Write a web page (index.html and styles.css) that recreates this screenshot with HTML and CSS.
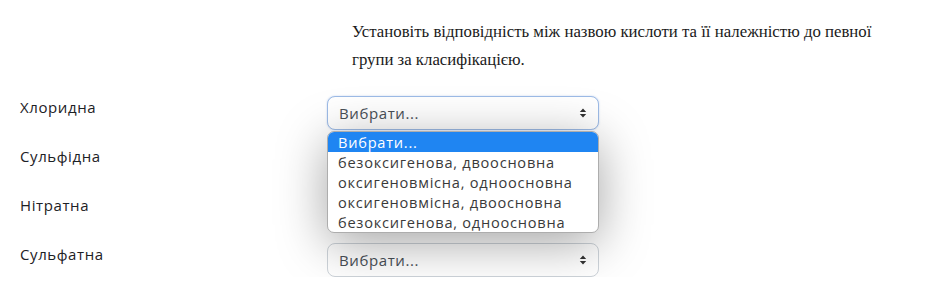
FILE: index.html
```html
<!DOCTYPE html>
<html lang="uk">

<head>
    <title>Відповідність кислот</title>
    <link rel="stylesheet" href="styles.css">
</head>

<body>
<div class="question">
    <div class="qtext">
        Установіть відповідність між назвою кислоти та її належністю до певної<br>
        групи за класифікацією.
    </div>

    <div class="answer">
        <div class="row">
            <div class="label">Хлоридна</div>
            <div class="select focused">
                <span>Вибрати...</span>
                <svg class="arrows" width="8" height="10" viewBox="0 0 8 10"><path d="M4 0.5L7.2 4H0.8Z M4 9.5L7.2 6H0.8Z" fill="#333"/></svg>
            </div>
        </div>
        <div class="row">
            <div class="label">Сульфідна</div>
            <div class="select">
                <span>Вибрати...</span>
                <svg class="arrows" width="8" height="10" viewBox="0 0 8 10"><path d="M4 0.5L7.2 4H0.8Z M4 9.5L7.2 6H0.8Z" fill="#333"/></svg>
            </div>
        </div>
        <div class="row">
            <div class="label">Нітратна</div>
            <div class="select">
                <span>Вибрати...</span>
                <svg class="arrows" width="8" height="10" viewBox="0 0 8 10"><path d="M4 0.5L7.2 4H0.8Z M4 9.5L7.2 6H0.8Z" fill="#333"/></svg>
            </div>
        </div>
        <div class="row">
            <div class="label">Сульфатна</div>
            <div class="select">
                <span>Вибрати...</span>
                <svg class="arrows" width="8" height="10" viewBox="0 0 8 10"><path d="M4 0.5L7.2 4H0.8Z M4 9.5L7.2 6H0.8Z" fill="#333"/></svg>
            </div>
        </div>
    </div>

    <!-- open list of the first select -->
    <ul class="dropdown">
        <li class="selected">Вибрати...</li>
        <li>безоксигенова, двоосновна</li>
        <li>оксигеновмісна, одноосновна</li>
        <li>оксигеновмісна, двоосновна</li>
        <li>безоксигенова, одноосновна</li>
    </ul>
</div>
</body>

</html>
```

FILE: styles.css
```css
body {
    margin: 0;
    background-color: #fff;
    color: #1d2125;
    font-family: "Open Sans", "DejaVu Sans", sans-serif;
}

.question {
    position: relative;
    padding-left: 20px;
}

.qtext {
    margin-left: 332px;
    padding-top: 18px;
    font-family: "Liberation Serif", serif;
    font-size: 16.8px;
    line-height: 28px;
    color: #1a1a1a;
}

.answer {
    display: flex;
    flex-direction: column;
    gap: 15px;
    margin-top: 22px;
}

.row {
    display: grid;
    grid-template-columns: 307px 272px;
    align-items: start;
}

.label {
    font-size: 15px;
    line-height: 22px;
    letter-spacing: 0.6px;
    color: #1d2125;
}

.select {
    box-sizing: border-box;
    height: 34px;
    display: flex;
    align-items: center;
    justify-content: space-between;
    padding: 0 11px 0 11px;
    border: 1px solid #ced4da;
    border-radius: 8px;
    font-size: 15px;
    letter-spacing: 0.6px;
    color: #495057;
    background-color: #fff;
}

.select.focused {
    border-color: #9dbbe6;
    box-shadow: 0 0 2px rgba(80, 130, 210, 0.35);
}

.arrows {
    display: block;
}

.dropdown {
    position: absolute;
    left: 327px;
    top: 131px;
    width: 272px;
    box-sizing: border-box;
    margin: 0;
    padding: 0;
    list-style: none;
    background-color: #fff;
    border: 1px solid #adadad;
    border-radius: 7px;
    overflow: hidden;
    box-shadow: 0 10px 50px rgba(0, 0, 0, 0.36);
    font-size: 14.6px;
    line-height: 20px;
    letter-spacing: 0.75px;
    color: #3a3a3a;
}

.dropdown li {
    height: 20px;
    padding-left: 10px;
}

.dropdown li.selected {
    background-color: #1f85f2;
    color: #fff;
}
```
